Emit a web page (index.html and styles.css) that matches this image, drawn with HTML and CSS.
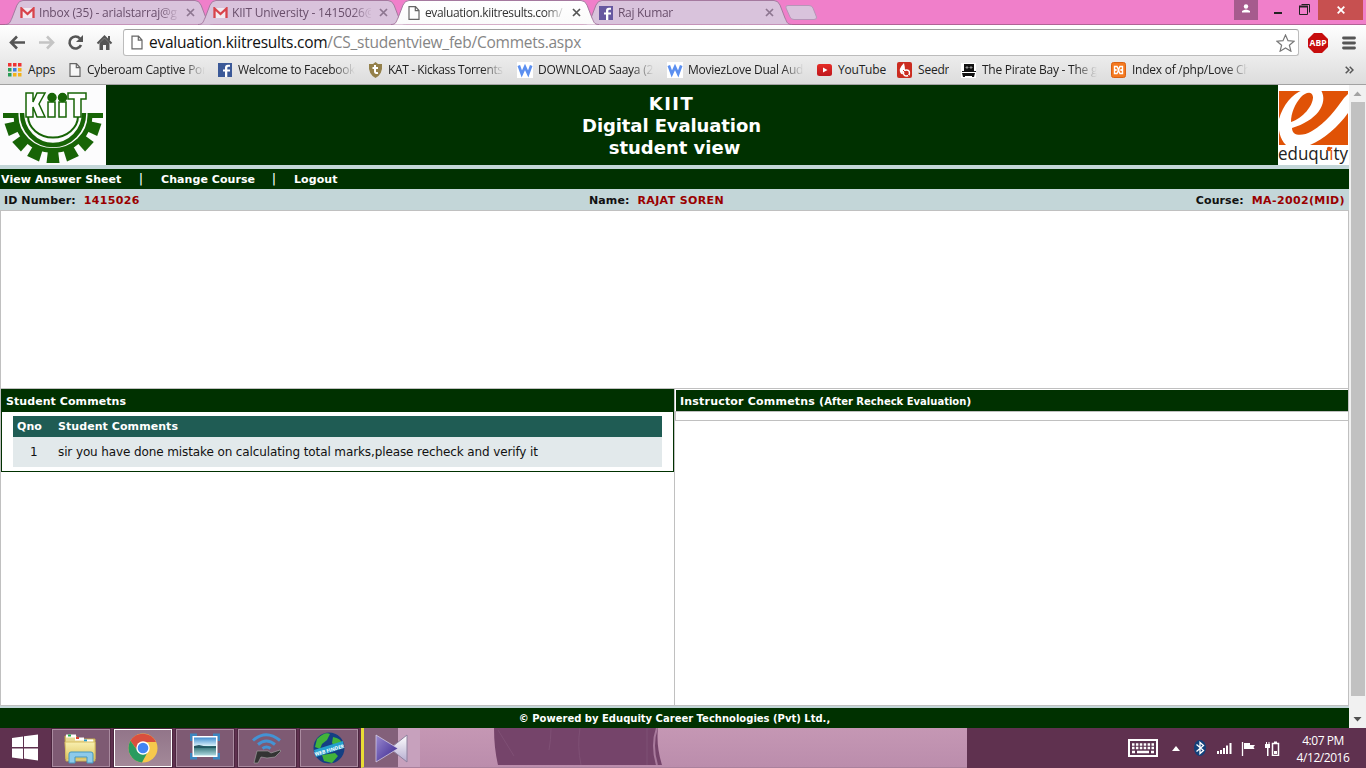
FILE: index.html
```html
<!DOCTYPE html>
<html lang="en">
<head>
<meta charset="utf-8">
<title>Digital Evaluation</title>
<link rel="stylesheet" href="styles.css">
</head>
<body>
<svg width="0" height="0" class="defs">
  <defs>
    <linearGradient id="tabOn" x2="0" y2="1"><stop stop-color="#fff"/><stop offset="1" stop-color="#fafafa"/></linearGradient>
    <linearGradient id="folder" x2="0" y2="1"><stop stop-color="#f8efb0"/><stop offset="1" stop-color="#dfc763"/></linearGradient>
    <linearGradient id="lake" x2="0" y2="1"><stop stop-color="#3f8ed0"/><stop offset=".45" stop-color="#d5edf8"/><stop offset=".5" stop-color="#2a6c70"/><stop offset="1" stop-color="#aed8df"/></linearGradient>
    <linearGradient id="kmL" x2="1" y2="1"><stop stop-color="#9b8ad0"/><stop offset="1" stop-color="#35218c"/></linearGradient>
    <linearGradient id="kmR" x2="0" y2="1"><stop stop-color="#fff"/><stop offset="1" stop-color="#b5acd0"/></linearGradient>
    <linearGradient id="red" x2="0" y2="1"><stop stop-color="#e52d27"/><stop offset="1" stop-color="#bf171d"/></linearGradient>
    <symbol id="tab" viewBox="0 0 208 25"><path d="M0 24.5C5 24.500 5 22 7 18L12 5Q14 .5 18 .5H190Q194 .5 196 5L201 18C203 22 203 24.500 208 24.500" stroke="#a5799f"/></symbol>
    <symbol id="gmail" viewBox="0 0 15 12"><path fill="#f1eaf0" d="M1 1h13v10H1z"/><path d="M1.500 11V1.500L7.500 7l6-5.500V11" fill="none" stroke="#d8434b" stroke-width="2.300"/></symbol>
    <symbol id="page" viewBox="0 0 12 14"><path d="M1 .7h6.500L11 4.500v8.800H1zM7.300 .7v4H11" fill="#fff" fill-opacity=".7" stroke="#666" stroke-width="1.200"/></symbol>
    <symbol id="fb" viewBox="0 0 14 14"><path fill="currentColor" d="M0 0h14v14H0z"/><path d="M9.300 14V8.600H12V6.500H9.300V5q0-1.200 1.200-1.200H12V1.700H9.800Q7 1.700 7 4.600V6.500H5v2.100h2V14z" fill="#fff"/></symbol>
    <symbol id="x" viewBox="0 0 9 9"><path d="M1 1l7 7M8 1L1 8" stroke="currentColor" stroke-width="1.700"/></symbol>
    <symbol id="w" viewBox="0 0 16 16"><path fill="#fff" d="M0 0h16v16H0z"/><path d="M1.800 3.500L4.800 12 8 5l3.200 7 3-8.500" fill="none" stroke="#5b8ff0" stroke-width="2.700"/></symbol>
  </defs>
</svg>

<header class="chrome">
  <div class="tabstrip">
    <div class="tab"><svg class="shape"><use href="#tab"/></svg><svg class="ico" width="15" height="12"><use href="#gmail"/></svg><span class="label">Inbox (35) - arialstarraj@g</span><svg class="close" width="9" height="9"><use href="#x"/></svg></div>
    <div class="tab"><svg class="shape"><use href="#tab"/></svg><svg class="ico" width="15" height="12"><use href="#gmail"/></svg><span class="label">KIIT University - 1415026@</span><svg class="close" width="9" height="9"><use href="#x"/></svg></div>
    <div class="tab on"><svg class="shape"><use href="#tab"/></svg><svg class="ico" width="12" height="14"><use href="#page"/></svg><span class="label">evaluation.kiitresults.com/</span><svg class="close" width="9" height="9"><use href="#x"/></svg></div>
    <div class="tab last"><svg class="shape"><use href="#tab"/></svg><svg class="ico violet" width="14" height="14"><use href="#fb"/></svg><span class="label">Raj Kumar</span><svg class="close" width="9" height="9"><use href="#x"/></svg></div>
    <svg class="newtab" width="33" height="16"><path d="M1 3Q0 .5 3 .5H24Q27 .5 28 3L31.500 12Q32 14.500 29 14.500H9Q6 14.500 5 12z" fill="#d9c3dc" stroke="#b795b8"/></svg>
    <div class="wincontrols">
      <span class="user"><svg width="24" height="20"><circle cx="12" cy="6.500" r="2.200" fill="#fff"/><path d="M8 12.500V11Q12 8 16 11V12.500z" fill="#fff"/></svg></span>
      <svg class="min" width="8" height="19"><path d="M0 13h8" stroke="#222" stroke-width="2"/></svg>
      <svg class="max" width="11" height="19"><path d="M.5 6.500h8v8H.5zM2.500 4.500h8v8" fill="none" stroke="#222"/><path d="M0 6.500h9" stroke="#222" stroke-width="2"/></svg>
      <span class="shut"><svg width="8" height="8"><path d="M.7.700l6.600 6.600M7.300.700L.700 7.300" stroke="#fff" stroke-width="1.800"/></svg></span>
    </div>
  </div>
  <div class="toolbar">
    <svg width="123" height="32" class="navicons" fill="none" stroke="#555" stroke-width="2.600">
      <path d="M10.500 17.500H25M17 11.500l-6 6 6 6"/><path stroke="#c4c4c4" d="M39 17.500h14M47 11.500l6 6-6 6"/>
      <path d="M80 13.500A6 6 0 1 0 81 20"/><path d="M83 10v7h-7z" fill="#555" stroke="none"/>
      <path d="M97.500 18.500L104.500 11.500l7 7M109 11v4" stroke-width="2"/><path d="M99.500 18l5-5 5 5v7H106v-5h-3v5h-3.500z" fill="#555" stroke="none"/>
    </svg>
    <div class="address"><svg width="12" height="15"><use href="#page"/></svg><span class="url">evaluation.kiitresults.com<span class="path">/CS_studentview_feb/Commets.aspx</span></span>
      <svg class="star" width="19" height="18"><path d="M9.500 1l2.500 5.700 6 .5-4.600 4 1.500 6-5.400-3.300L4.100 17.200l1.500-6-4.600-4 6-.5z" fill="#fff" stroke="#777" stroke-width="1.200"/></svg>
    </div>
    <svg class="abp" width="20" height="20"><path d="M6 0h8l6 6v8l-6 6H6l-6-6V6z" fill="#c70d0d"/><text x="10" y="13.300" text-anchor="middle" textLength="17" lengthAdjust="spacingAndGlyphs">ABP</text></svg>
    <svg class="burger" width="14" height="14"><path d="M1.500 2h11M1.500 7h11M1.500 12h11" stroke="#555" stroke-width="2.800" stroke-linecap="round"/></svg>
  </div>
  <nav class="bookmarks">
    <a class="b1"><svg width="14" height="14"><path fill="#e33" d="M0 0h3.500v3.500H0zM5 0h3.500v3.500H5zM10 0h3.500v3.500H10z"/><path fill="#2a9d57" d="M0 5h3.500v3.500H0zM0 10h3.500v3.500H0z"/><path fill="#3b7de0" d="M5 5h3.500v3.500H5z"/><path fill="#f2b21b" d="M10 5h3.500v3.500H10zM5 10h3.500v3.500H5zM10 10h3.500v3.500H10z"/></svg><span>Apps</span></a>
    <a class="b2"><svg width="12" height="14"><use href="#page"/></svg><span class="fade">Cyberoam Captive Por</span></a>
    <a class="b3"><svg width="14" height="14" color="#3b5998"><use href="#fb"/></svg><span class="fade">Welcome to Facebook</span></a>
    <a class="b4"><svg width="15" height="16"><path d="M1 2l4 0 2.500-2L10 2h4Q15 12 7.500 16 0 12 1 2z" fill="#94804a"/><path d="M7 3v6.500q0 2 3 1.500M4.500 6h5.500" stroke="#fff" stroke-width="2" fill="none"/></svg><span class="fade">KAT - Kickass Torrents</span></a>
    <a class="b5"><svg width="16" height="16"><use href="#w"/></svg><span class="fade">DOWNLOAD Saaya (2</span></a>
    <a class="b6"><svg width="16" height="16"><use href="#w"/></svg><span class="fade">MoviezLove Dual Aud</span></a>
    <a class="b7"><svg width="16" height="12"><rect width="15" height="12" rx="2.500" fill="url(#red)"/><path d="M6 3.500l4.500 2.500L6 8.500z" fill="#fff"/></svg><span>YouTube</span></a>
    <a class="b8"><svg width="15" height="16"><rect width="15" height="16" rx="2" fill="#cb2c20"/><path d="M7 1Q1 7 3.500 11 5 13 6 12 5 9 8 8 8 5 7 1z" fill="#fff"/><circle cx="9.500" cy="11" r="3" fill="none" stroke="#fff" stroke-width="1.300"/><path d="M6 8l6 6" stroke="#cb2c20"/></svg><span>Seedr</span></a>
    <a class="b9"><svg width="15" height="15"><path fill="#fff" d="M0 0h15v15H0z"/><path d="M3 1h10v7h2v1H1V8h2zM1 10h13l-1 4h-2v-1H4v1H2z" fill="#111"/><path d="M5 4h2v1H5zM9 4h2v1H9z" stroke="#fff" stroke-width=".5"/></svg><span class="fade">The Pirate Bay - The g</span></a>
    <a class="b10"><svg width="15" height="16"><rect x=".5" y=".5" width="14" height="15" rx="2" fill="#f4791f" stroke="#d96213"/><path d="M3.500 4.500h2.500l1.500 3 1.500-3h2.500v3L10 8l1.500.500v3H9l-1.500-3-1.500 3H3.500v-3L5 8 3.500 7.500z" fill="none" stroke="#fff" stroke-width="1.400"/></svg><span class="fade">Index of /php/Love Ch</span></a>
    <svg class="more" width="9" height="8"><path d="M.7.700L4 4 .700 7.300M4.700.700L8 4 4.700 7.300" fill="none" stroke="#555" stroke-width="1.500"/></svg>
  </nav>
</header>

<div class="viewport">
  <main class="site">
    <div class="banner">
      <svg class="kiit" width="106" height="80" viewBox="0 0 106 80">
        <path fill="#fcfcfd" d="M0 0h106v80H0z"/>
        <g fill="none" stroke="#176406">
          <path d="M3 30.500h13A37 35 0 0 0 90 30.500h13" stroke-width="5"/>
          <path d="M22 28A31 32 0 0 0 84 28" stroke-width="4.500"/>
          <path d="M28 31A25 21.500 0 0 0 78 31" stroke-width="2"/>
        </g>
        <g fill="#176406"><path id="tooth" d="M48 65h10l1.500 13h-13z"/><use href="#tooth" transform="rotate(24 53 29)"/><use href="#tooth" transform="rotate(48 53 29)"/><use href="#tooth" transform="rotate(71 53 29)"/><use href="#tooth" transform="rotate(-24 53 29)"/><use href="#tooth" transform="rotate(-48 53 29)"/><use href="#tooth" transform="rotate(-71 53 29)"/></g>
        <g fill="#fff" stroke="#176406" stroke-width="1.500"><path d="M26 8h7v9l4-9h8l-6 11 6 13h-8l-4-10v10h-7zM48 17h7v15h-7zM59 17h7v15h-7zM68 8h18v6h-5v18h-7V14h-6z"/><circle cx="52" cy="12.500" r="4" fill="#176406"/><circle cx="62.500" cy="12.500" r="4" fill="#176406"/></g>
      </svg>
      <h1><span class="l1">KIIT</span><span>Digital Evaluation</span><span class="l3">student view</span></h1>
      <svg class="edu" width="71" height="80" viewBox="0 0 71 80">
        <path fill="#fff" d="M0 0h71v80H0z"/><path fill="#e05206" d="M1 6h69v54H1z"/>
        <path fill="#fff" fill-rule="evenodd" d="M1 34C5 20 14 9 25 5H43C51 19 38 36 14 43C14 51 24 52 34 46C48 38 58 24 66 13L70 9V28C60 42 46 54 32 60H8C2 54 0 46 1 34zM13 37C25 33 35 21 35 12C34 5 27 8 23 12C17 19 13 28 13 37z"/>
        <text x="0" y="75" textLength="70" lengthAdjust="spacingAndGlyphs">eduqu<tspan fill="#e05206">i</tspan>ty</text><circle cx="51" cy="64" r="2.200" fill="#e05206"/>
      </svg>
    </div>
    <nav class="menu"><a class="m1">View Answer Sheet</a><i>|</i><a class="m2">Change Course</a><i>|</i><a class="m3">Logout</a></nav>
    <div class="ids"><span class="idno">ID Number:<b>1415026</b></span><span>Name:<b>RAJAT SOREN</b></span><span class="course">Course:<b>MA-2002(MID)</b></span></div>
    <section class="answers"></section>
    <section class="comments">
      <div class="student">
        <div class="box">
          <h2>Student Commetns</h2>
          <div class="grid">
            <div class="row head"><span class="q">Qno</span><span>Student Comments</span></div>
            <div class="row item"><span class="q">1</span><span class="said">sir you have done mistake on calculating total marks,please recheck and verify it</span></div>
          </div>
        </div>
      </div>
      <div class="instructor"><h2>Instructor Commetns (<small>After Recheck Evaluation</small>)</h2><div class="empty"></div></div>
    </section>
    <footer>© Powered by Eduquity Career Technologies (Pvt) Ltd.,</footer>
  </main>
  <div class="scroll"><svg width="17" height="17"><path d="M4.500 11l4-4.500 4 4.500z" fill="#a3a3a3"/></svg><div class="thumb"></div><svg width="17" height="17"><path d="M4.500 6l4 4.500 4-4.500z" fill="#505050"/></svg></div>
</div>

<div class="taskbar">
  <svg class="start" width="52" height="40"><path d="M12 10l11-1.500V19H12zM24 8.300L38 6.500V19H24zM12 20.500h11V31l-11-1.500zM24 20.500h14V32.500l-14-2z" fill="#fff"/></svg>
  <div class="apps">
    <div class="app"><svg width="34" height="32"><path d="M1 4h11l2 3h17v22H2z" fill="#e8d992" stroke="#c5aa4c"/><path d="M2 4h10M11 7h9M20 9h9" stroke="#fff" stroke-width="3"/><path d="M4 3.500h3" stroke="#22b04c" stroke-width="2"/><path d="M12 6h3" stroke="#d43" stroke-width="2"/><path d="M20 8.500h3" stroke="#29c" stroke-width="2"/><path d="M1 10h30v17H2z" fill="url(#folder)" stroke="#d8be62"/><path d="M5 31v-9q0-2 2-2h20q2 0 2 2v9h-6v-6H11v6z" fill="#8dcaea" stroke="#4797bf"/></svg></div>
    <div class="app active"><svg width="30" height="30" viewBox="0 0 30 30"><circle cx="15" cy="15" r="14.500" fill="#f6c84c"/><path d="M2.400 7.800A14.500 14.500 0 0 1 28 9H15a6 6 0 0 0-5.500 8.500z" fill="#d94f3e"/><path d="M2.400 7.800A14.500 14.500 0 0 0 14 29.500L20.200 18A6 6 0 0 1 9.500 17.700z" fill="#2a9b60"/><circle cx="15" cy="15" r="6.700" fill="#fff"/><circle cx="15" cy="15" r="5.300" fill="#4285f4"/></svg></div>
    <div class="app"><svg class="pic" width="30" height="28"><path d="M1 8V2h6M23 2h6v6M1 20v5h6M23 25h6v-5" fill="none" stroke="#3b86bf" stroke-width="3"/><path fill="#fff" d="M2.500 3h25v21h-25z"/><path fill="url(#lake)" d="M4 4.500h22v18H4z"/><path d="M4 13l5-1 9 2 8-1v2H4z" fill="#245762"/></svg></div>
    <div class="app"><svg width="30" height="32"><path d="M1 8.500Q14-3 28 8.500M6 12.500q8.500-7 17 0M10.500 16.500q4-3 8 0" fill="none" stroke="#4393d4" stroke-width="3"/><path d="M5 19h11l3 2 9-3 1 1-6 6-8 1-6-1-3 6H2z" fill="#333" stroke="#aaa" stroke-width=".6"/></svg></div>
    <div class="app"><svg width="34" height="34"><circle cx="17" cy="17" r="15.500" fill="#143f83"/><path d="M5 8q8-8 13-5l-3 6-5 4-2 5-5-2zM21 6q8 1 10 8l-5 5-6-7zM10 24l13-2 3 3-6 7-8-2z" fill="#42b33a"/><path d="M2 19L31 10l1 7L4 26z" fill="#26a0ce"/><text class="web" x="17" y="21" text-anchor="middle" transform="rotate(-16 17 18)">WEB FINDER</text></svg></div>
  </div>
  <div class="player">
    <svg class="km" width="34" height="30"><path d="M32 1v27L15 14.500z" fill="url(#kmR)" stroke="#8e829f"/><path d="M1 1v27l22-13.500z" fill="url(#kmL)" stroke="#dcd5eb" stroke-width=".7"/></svg>
    <svg class="figure" width="170" height="37"><path d="M0 0h164q-2 18 4 37H4Q0 20 0 0z" fill="#75446a"/><path d="M86 0q-3 18 1 37M153 0v37M4 2l16 26M55 22q2-10 2-22" fill="none" stroke="#7f5075"/><path d="M163 0q-6 17 0 37" fill="none" stroke="#a87a9c" stroke-width="2"/></svg>
  </div>
  <div class="tray">
    <svg width="30" height="18"><path d="M1 1h28v16H1z" fill="#5b3350" stroke="#fff" stroke-width="2"/><path d="M4 5.500h22M4 9h22" stroke="#fff" stroke-width="2.500" stroke-dasharray="2.500 1.400"/><path d="M4 13h3M9 13h12M23 13h3" stroke="#fff" stroke-width="2.500"/></svg>
    <svg class="up" width="8" height="5"><path d="M0 5l4-5 4 5z" fill="#fff"/></svg>
    <svg class="bt" width="12" height="16"><ellipse cx="6" cy="8" rx="6" ry="8" fill="#12417b"/><path d="M2.500 4.500l7 6L6 13.500v-11l3.500 3-7 6" fill="none" stroke="#fff" stroke-width="1.300"/></svg>
    <svg class="sig" width="15" height="12"><path d="M1 9v3M4 8v4M7 6v6M10 3.500v8.500M13.500 1v11" stroke="#fff" stroke-width="2"/></svg>
    <svg class="flag" width="15" height="15"><path d="M1.500 1v14" stroke="#fff" stroke-width="1.300"/><path d="M3 2h6v2h5l-1.500 2 1 2H8V8H3z" fill="#fff"/></svg>
    <svg class="bat" width="15" height="15"><path d="M7.500 2.500h6v12h-6z" fill="none" stroke="#fff" stroke-width="1.500"/><path d="M9 10h3v3H9zM9 .5h3v2H9zM0 3h5v4H0zM1 1h1v3H1zM3.500 1h1v3h-1zM2 6h1.500v9H2z" fill="#fff"/></svg>
    <div class="clock"><div>4:07 PM</div><div>4/12/2016</div></div>
  </div>
</div>
</body>
</html>
```
FILE: styles.css
```css
* { box-sizing: border-box; }
body { margin: 0; width: 1366px; height: 768px; overflow: hidden; display: flex; flex-direction: column; font-family: "DejaVu Sans", sans-serif; background: #fff; }
svg { display: block; flex: none; }
.defs { position: absolute; }
h1, h2 { margin: 0; }

/* browser frame */
.chrome { height: 85px; flex: none; font: 12px "Open Sans", sans-serif; letter-spacing: -.2px; background: linear-gradient(#fff 25px, #dcdcdc 84px); border-bottom: 1px solid #a2a2a2; }
.tabstrip { height: 25px; display: flex; background: #f07fca; border-bottom: 1px solid #b16296; padding-left: 5px; }
.tab { position: relative; width: 208px; height: 25px; margin-right: -15px; padding-left: 15px; display: flex; align-items: center; color: #694f6b; }
.shape { position: absolute; left: 0; top: 0; width: 208px; height: 25px; fill: #d9c3dc; }
.ico, .label { position: relative; }
.label { margin-left: 4px; width: 139px; overflow: hidden; white-space: nowrap; line-height: 20px; -webkit-mask-image: linear-gradient(90deg, #000 120px, transparent 141px); }
.close { position: absolute; left: 181px; top: 8px; color: #8d7690; }
.tab.on { z-index: 2; color: #333; padding-left: 17px; }
.on .shape { fill: url(#tabOn); }
.on .label { margin-left: 5px; letter-spacing: -.38px; }
.on .close { color: #555; }
.violet { color: #6758a0; }
.last .label { margin-left: 5px; letter-spacing: -.3px; }
.newtab { margin: 5px 0 0 8px; }
.wincontrols { margin-left: auto; display: flex; height: 19px; }
.user { width: 24px; height: 20px; background: #a65b8d; margin-right: 16px; }
.min { margin-right: 17px; }
.max { margin-right: 8px; }
.shut { width: 45px; height: 20px; background: #c75050; margin-right: 3px; display: flex; align-items: center; justify-content: center; }
.toolbar { height: 32px; display: flex; align-items: center; }
.navicons { align-self: flex-start; }
.address { width: 1176px; height: 27px; margin-top: 3px; border: 1px solid #bcbcbc; border-top-color: #9f9f9f; border-radius: 3px; background: #fff; display: flex; align-items: center; padding: 0 3px 0 7px; }
.url { margin-left: 6px; font-size: 15.5px; letter-spacing: -.25px; color: #111; white-space: nowrap; padding-bottom: 1px; }
.path { color: #858585; }
.star { margin-left: auto; }
.abp { margin: 3px 0 0 9px; }
.abp text { font: bold 9px "Open Sans", sans-serif; fill: #fff; letter-spacing: 0; }
.burger { margin: 3px 0 0 14px; }
.bookmarks { height: 26px; display: flex; align-items: center; color: #222; padding-left: 8px; }
.bookmarks a { display: flex; align-items: center; height: 26px; white-space: nowrap; flex: none; }
.bookmarks span { margin-left: 6px; overflow: hidden; line-height: 18px; }
.bookmarks .fade { flex: 1; letter-spacing: -.25px; -webkit-mask-image: linear-gradient(90deg, #000 calc(100% - 22px), transparent); }
.b1 { width: 61px; } .b2 { width: 136px; margin-right: 13px; } .b3 { width: 137px; margin-right: 13px; }
.b4 { width: 136px; margin-right: 13px; } .b5 { width: 137px; margin-right: 13px; } .b6 { width: 137px; margin-right: 13px; }
.bookmarks .b3 .fade { letter-spacing: -.3px; }
.bookmarks .b4 .fade { letter-spacing: -.38px; }
.bookmarks .b4 span, .bookmarks .b5 span, .bookmarks .b6 span, .bookmarks .b7 span { margin-left: 5px; }
.b7 { width: 80px; } .b8 { width: 64px; } .b9 { width: 136px; margin-right: 14px; } .b10 { width: 137px; }
.more { margin-left: auto; margin-right: 12px; }

/* page */
.viewport { height: 643px; flex: none; display: flex; }
.site { width: 1349px; display: flex; flex-direction: column; background: #c3d6d8; }
.banner { height: 80px; background: #003100; display: flex; }
.banner h1 { flex: 1; font-size: 18px; line-height: 22px; color: #fff; text-align: center; padding: 8px 41px 0 0; letter-spacing: -.1px; }
.banner h1 span { display: block; }
.banner h1 .l1 { letter-spacing: 1.5px; }
.banner h1 .l3 { padding-left: 6px; letter-spacing: 0; }
.edu text { font: 500 18px "Open Sans", sans-serif; fill: #222; }
.menu { height: 20px; margin-top: 4px; background: #003100; color: #fff; font-weight: bold; font-size: 11px; letter-spacing: .07px; line-height: 21px; padding-left: 1px; display: flex; white-space: nowrap; }
.menu i { font-style: normal; font-weight: normal; width: 40px; text-align: center; font-size: 13px; line-height: 20px; }
.m1 { width: 120px; } .m2 { width: 93px; }
.ids { height: 21px; padding: 1px 4px 0; font-weight: bold; font-size: 11px; letter-spacing: .1px; line-height: 22px; display: flex; color: #111; white-space: pre; }
.ids b { margin-left: 8px; color: #900; letter-spacing: .36px; }
.idno { width: 585px; }
.course { margin-left: auto; }
.answers { height: 179px; background: #fff; border: 1px solid #c0c0c0; }
.comments { height: 318px; margin-top: -1px; background: #fff; border: 1px solid #c0c0c0; display: flex; }
.comments h2 { background: #003100; color: #fff; font-size: 11px; letter-spacing: .07px; line-height: 22px; height: 22px; padding: 1px 0 0 4px; white-space: nowrap; }
.student { width: 674px; border-right: 1px solid #c0c0c0; }
.box { border: 1px solid #003100; height: 83px; }
.grid { margin: 4px 11px 0; }
.row { display: flex; padding-left: 4px; white-space: nowrap; }
.q { width: 41px; flex: none; }
.head { height: 21px; background: #1f5c54; color: #fff; font-size: 11px; line-height: 22px; font-weight: bold; letter-spacing: .07px; }
.item { height: 30px; background: #e2e9eb; color: #111; font-size: 12px; line-height: 30px; }
.said { letter-spacing: -.11px; }
.item .q { padding-left: 13px; }
.instructor { flex: 1; }
.instructor h2 { margin: 1px 0 0 1px; height: 21px; line-height: 21px; letter-spacing: .2px; }
.instructor small { font-size: 10px; letter-spacing: 0; }
.empty { height: 10px; border: 1px solid #c0c0c0; border-right: 0; }
footer { margin-top: 2px; height: 20px; background: #003100; color: #fff; font-weight: bold; font-size: 10px; line-height: 21px; text-align: center; }
.scroll { width: 17px; background: #f1f1f1; display: flex; flex-direction: column; }
.thumb { flex: 1; background: #c1c1c1; margin: 0 1px 15px 2px; }

/* taskbar */
.taskbar { height: 40px; flex: none; background: #5f314f; display: flex; color: #fff; }
.apps { display: flex; gap: 4px; padding-top: 1px; }
.app { width: 58px; height: 38px; border: 1px solid #aa8ba0; background: #7e5a73; display: flex; align-items: center; justify-content: center; outline: 1px solid #4c263f; }
.active { background: linear-gradient(#927589, #a38999); border-color: #fff; }
.pic { margin-bottom: 3px; }
.web { font: bold 5px "Open Sans", sans-serif; fill: #fff; }
.player { margin-left: 3px; width: 606px; height: 40px; border-left: 3px solid #e8dc35; background: linear-gradient(90deg, #83607a 34px, #c7a1bd 34px, #c7a1bd 56px, transparent 56px), linear-gradient(#c597b4, #bb8dac); display: flex; border-bottom: 1px solid #a9819d; }
.km { margin: 6px 0 0 11px; }
.figure { margin-left: 85px; }
.tray { flex: 1; display: flex; align-items: center; padding-left: 161px; }
.up { margin-left: 14px; } .bt { margin-left: 14px; } .sig { margin-left: 11px; } .flag { margin-left: 9px; } .bat { margin-left: 9px; }
.clock { margin-left: auto; width: 74px; font: 12px/17px "Open Sans", sans-serif; letter-spacing: -.45px; text-align: center; padding-top: 1px; margin-right: 6px; white-space: nowrap; }
```
